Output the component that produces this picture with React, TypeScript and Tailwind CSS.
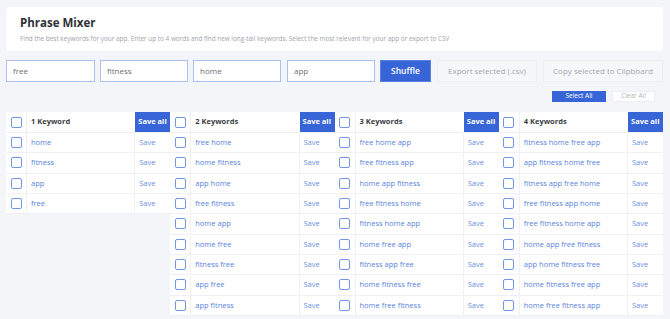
import { useState } from "react";

const FONT = "font-['Open_Sans','Noto_Sans',sans-serif]";

const TABLES: { title: string; rows: string[] }[] = [
  { title: "1 Keyword", rows: ["home", "fitness", "app", "free"] },
  {
    title: "2 Keywords",
    rows: [
      "free home",
      "home fitness",
      "app home",
      "free fitness",
      "home app",
      "home free",
      "fitness free",
      "app free",
      "app fitness",
    ],
  },
  {
    title: "3 Keywords",
    rows: [
      "free home app",
      "free fitness app",
      "home app fitness",
      "free fitness home",
      "fitness home app",
      "home free app",
      "fitness app free",
      "home fitness free",
      "home free fitness",
    ],
  },
  {
    title: "4 Keywords",
    rows: [
      "fitness home free app",
      "app fitness home free",
      "fitness app free home",
      "free fitness app home",
      "free fitness home app",
      "home app free fitness",
      "app home fitness free",
      "home fitness free app",
      "home free fitness app",
    ],
  },
];

function Checkbox() {
  return (
    <span className="block size-[11px] rounded-[2px] border-[1.5px] border-[#7396e4] bg-white" />
  );
}

function KeywordTable({ title, rows }: { title: string; rows: string[] }) {
  return (
    <div className="flex-1 bg-white">
      <div className="grid h-[21px] grid-cols-[21px_1fr_35px] border-b border-[#eef0f3]">
        <div className="flex items-center justify-center border-r border-[#eef0f3]">
          <Checkbox />
        </div>
        <div className="flex items-center px-[4px] text-[7.5px] font-bold text-[#3a3d42]">
          {title}
        </div>
        <div className="flex items-center whitespace-nowrap bg-[#3765d8] px-[3px] text-[7.5px] font-bold text-white">
          Save all
        </div>
      </div>
      {rows.map((r) => (
        <div
          key={r}
          className="grid h-[20.33px] grid-cols-[21px_1fr_35px] border-b border-[#eef0f3]"
        >
          <div className="flex items-center justify-center border-r border-[#eef0f3]">
            <Checkbox />
          </div>
          <div className="flex items-center border-r border-[#eef0f3] px-[4px] text-[7.5px] text-[#5a84dd]">
            {r}
          </div>
          <div className="flex items-center px-[4px] text-[7.5px] text-[#6d90e2]">Save</div>
        </div>
      ))}
    </div>
  );
}

export default function App() {
  const [words] = useState(["free", "fitness", "home", "app"]);

  return (
    <div className={`${FONT} h-[319px] overflow-hidden bg-[#f4f5f8] px-[6px] pt-[7px]`}>
      <div className="mr-[1px] flex h-[44px] flex-col justify-center rounded-[4px] bg-white px-[14px]">
        <h1 className="text-[11.5px] leading-[16px] font-bold text-[#2e3035]">Phrase Mixer</h1>
        <p className="mt-[3px] text-[6.4px] leading-[9px] text-[#9ea3aa]">
          Find the best keywords for your app. Enter up to 4 words and find new long-tail keywords.
          Select the most relevant for your app or export to CSV
        </p>
      </div>

      <div className="mt-[9px] flex h-[22px] items-stretch">
        {words.map((w, i) => (
          <div
            key={w}
            className={`flex items-center border border-[#aac0f0] bg-white px-[6px] text-[8px] text-[#6b6f75] ${
              i === 0 ? "w-[89px]" : "w-[88px]"
            } ${i === 3 ? "ml-[6px]" : i > 0 ? "ml-[5px]" : ""}`}
          >
            {w}
          </div>
        ))}
        <button
          type="button"
          className="ml-[5px] w-[51px] border border-[#5a80e0] bg-[#3765d8] text-[8.5px] font-semibold text-white"
        >
          Shuffle
        </button>
        <button
          type="button"
          className="ml-[6px] w-[100px] border border-[#eceef1] bg-[#f6f7f9] text-[8px] text-[#a3a7ad]"
        >
          Export selected (.csv)
        </button>
        <button
          type="button"
          className="ml-[6px] w-[120px] border border-[#eceef1] bg-[#f6f7f9] text-[8px] text-[#a3a7ad]"
        >
          Copy selected to Clipboard
        </button>
      </div>

      <div className="mt-[9px] flex h-[11px] justify-end pr-[9px]">
        <button
          type="button"
          className="w-[54px] bg-[#3765d8] text-[6.5px] leading-none text-white"
        >
          Select All
        </button>
        <button
          type="button"
          className="ml-[6px] w-[43px] border border-[#eceef1] bg-white text-[6.5px] leading-none text-[#b0b4ba]"
        >
          Clear All
        </button>
      </div>

      <div className="mt-[10px] mr-[1px] flex items-start">
        {TABLES.map((t) => (
          <KeywordTable key={t.title} title={t.title} rows={t.rows} />
        ))}
      </div>
    </div>
  );
}
